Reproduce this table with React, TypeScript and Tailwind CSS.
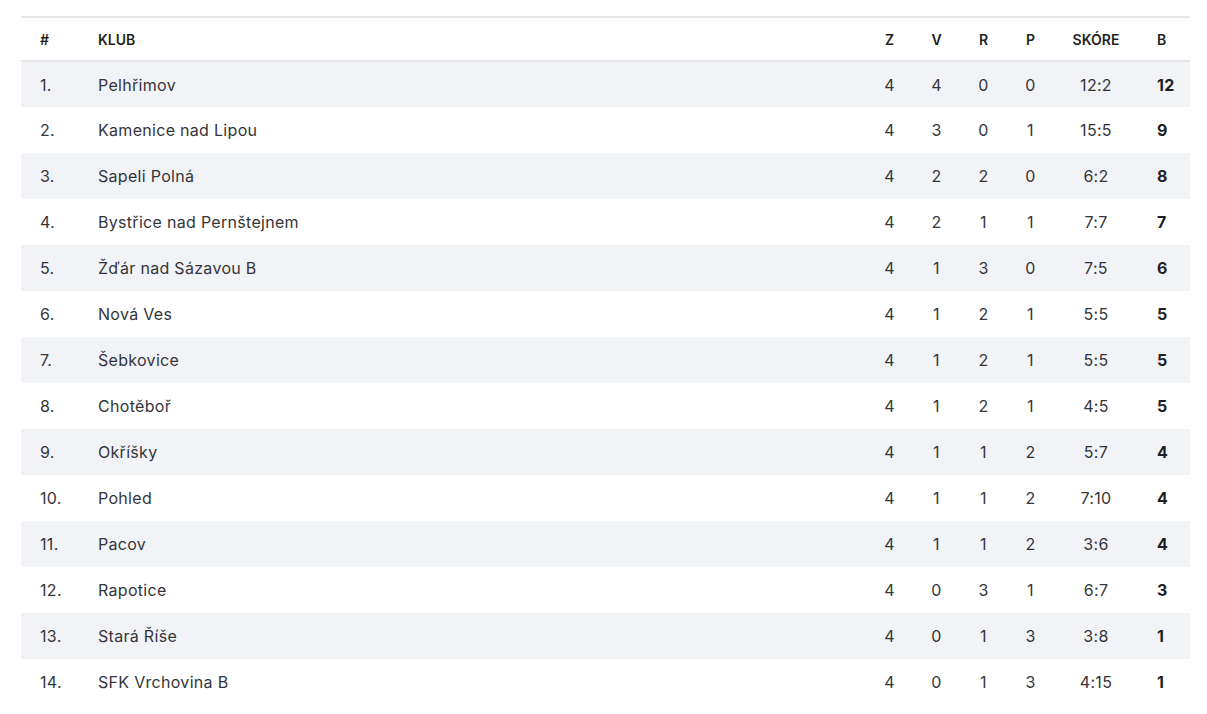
const rows: [number, string, number, number, number, number, string, number][] = [
  [1, "Pelhřimov", 4, 4, 0, 0, "12:2", 12],
  [2, "Kamenice nad Lipou", 4, 3, 0, 1, "15:5", 9],
  [3, "Sapeli Polná", 4, 2, 2, 0, "6:2", 8],
  [4, "Bystřice nad Pernštejnem", 4, 2, 1, 1, "7:7", 7],
  [5, "Žďár nad Sázavou B", 4, 1, 3, 0, "7:5", 6],
  [6, "Nová Ves", 4, 1, 2, 1, "5:5", 5],
  [7, "Šebkovice", 4, 1, 2, 1, "5:5", 5],
  [8, "Chotěboř", 4, 1, 2, 1, "4:5", 5],
  [9, "Okříšky", 4, 1, 1, 2, "5:7", 4],
  [10, "Pohled", 4, 1, 1, 2, "7:10", 4],
  [11, "Pacov", 4, 1, 1, 2, "3:6", 4],
  [12, "Rapotice", 4, 0, 3, 1, "6:7", 3],
  [13, "Stará Říše", 4, 0, 1, 3, "3:8", 1],
  [14, "SFK Vrchovina B", 4, 0, 1, 3, "4:15", 1],
];

export default function App() {
  return (
    <div className="min-h-[714px] bg-white pt-[16px] pl-[21px] font-['Inter','Noto_Sans',sans-serif]">
      <table className="w-[1169px] table-fixed border-collapse border-t-2 border-[#e6e7eb]">
        <colgroup>
          <col className="w-[77px]" />
          <col />
          <col className="w-[47px]" />
          <col className="w-[47px]" />
          <col className="w-[47px]" />
          <col className="w-[47px]" />
          <col className="w-[84px]" />
          <col className="w-[52px]" />
        </colgroup>
        <thead>
          <tr className="h-[44px] border-b-2 border-[#e6e7eb] text-[14px] font-semibold uppercase text-[#1f1f22]">
            <th className="pl-[19px] text-left font-semibold">#</th>
            <th className="text-left font-semibold">Klub</th>
            <th className="text-center font-semibold">Z</th>
            <th className="text-center font-semibold">V</th>
            <th className="text-center font-semibold">R</th>
            <th className="text-center font-semibold">P</th>
            <th className="text-center font-semibold">Skóre</th>
            <th className="pl-[19px] text-left font-semibold">B</th>
          </tr>
        </thead>
        <tbody className="text-[16px] tracking-[0.3px] text-[#34353a]">
          {rows.map(([pos, club, z, v, r, p, score, pts]) => (
            <tr key={pos} className={`h-[46px] ${pos % 2 === 1 ? "bg-[#f2f3f7]" : "bg-white"}`}>
              <td className="pl-[19px]">{pos}.</td>
              <td>{club}</td>
              <td className="text-center">{z}</td>
              <td className="text-center">{v}</td>
              <td className="text-center">{r}</td>
              <td className="text-center">{p}</td>
              <td className="text-center">{score}</td>
              <td className="pl-[19px] font-bold text-[#1f1f22]">{pts}</td>
            </tr>
          ))}
        </tbody>
      </table>
    </div>
  );
}
